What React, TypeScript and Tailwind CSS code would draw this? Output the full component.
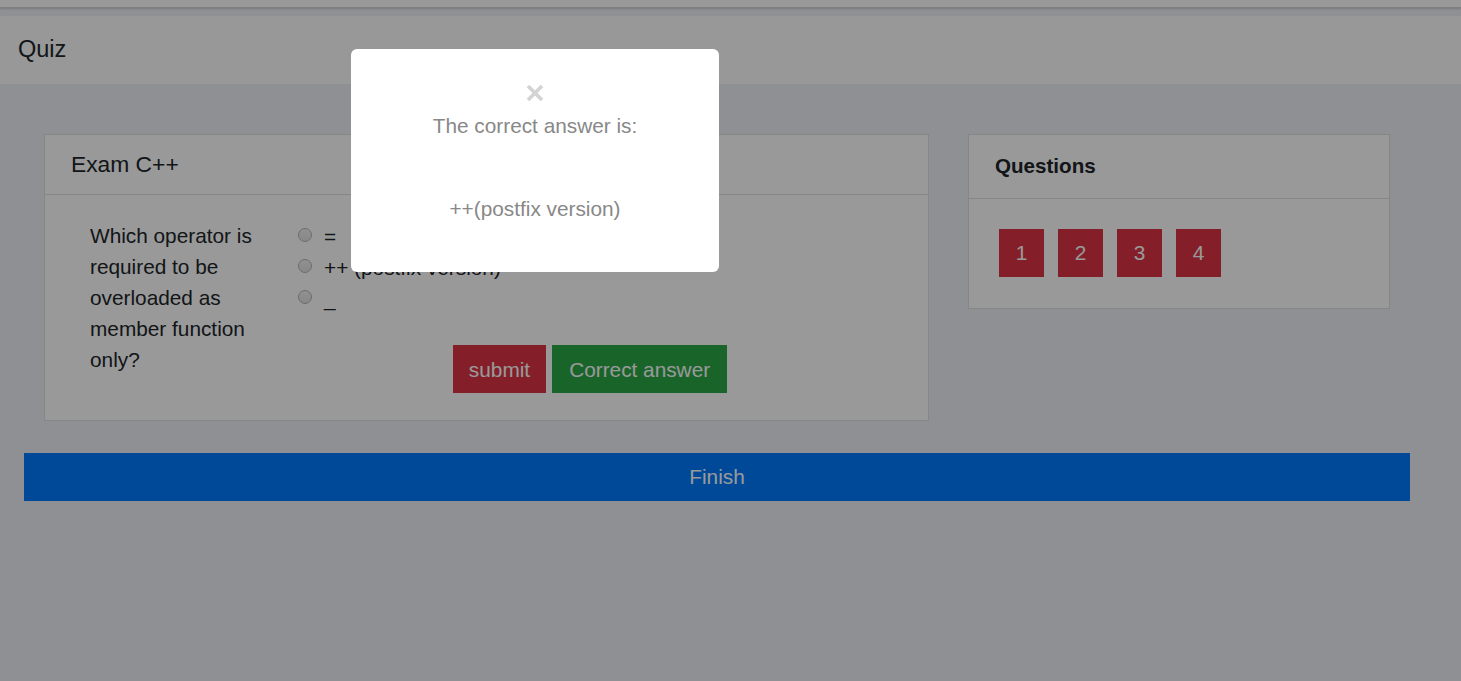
import React from "react";

const options = ["=", "++ (postfix version)", "_"];
const questions = [1, 2, 3, 4];

export default function App() {
  return (
    <div className="relative min-h-[681px] bg-[#eef0f6] font-['Liberation_Sans',Arial,sans-serif] text-[#212529] overflow-hidden">
      {/* top strip */}
      <div className="h-[8px] bg-white border-b border-[#d4d4d4] shadow-[0_1px_2px_rgba(0,0,0,0.15)]"></div>

      {/* navbar */}
      <nav className="mt-[8px] h-[68px] bg-[#fdfdfd] flex items-center pl-[18px]">
        <span className="text-[23.5px]">Quiz</span>
      </nav>

      <main className="pl-[24px] pt-[50px]">
        <div className="flex items-start gap-[39px] pl-[20px]">
          {/* exam card */}
          <section className="w-[885px] bg-white border border-[#dfdfdf]">
            <header className="h-[60px] border-b border-[#dfdfdf] flex items-center pl-[26px]">
              <h2 className="text-[22.8px]">Exam C++</h2>
            </header>
            <div className="flex pl-[45px] pt-[26px] pb-[27px] text-[20.8px] leading-[31px]">
              <p className="w-[178px] -mt-[1px]">Which operator is required to be overloaded as member function only?</p>
              <div className="ml-[30px] w-[584px]">
                {options.map((o) => (
                  <label key={o} className="flex items-center h-[31px]">
                    <span className="w-[14px] h-[14px] rounded-full border border-[#b5b5b5] bg-[linear-gradient(#f2f2f2,#e2e2e2)] -mt-[4px]"></span>
                    <span className="ml-[12px]">{o}</span>
                  </label>
                ))}
                <div className="flex justify-center gap-[6px] mt-[31px]">
                  <button className="h-[48px] px-[16px] bg-[#dc3545] text-white text-[20.8px]">submit</button>
                  <button className="h-[48px] px-[17px] bg-[#28a745] text-white text-[20.8px]">Correct answer</button>
                </div>
              </div>
            </div>
          </section>

          {/* questions card */}
          <section className="w-[422px] bg-white border border-[#dfdfdf]">
            <header className="h-[64px] border-b border-[#dfdfdf] flex items-center pl-[26px]">
              <h2 className="text-[20.6px] font-bold">Questions</h2>
            </header>
            <div className="flex gap-[14px] pl-[30px] pt-[30px] pb-[31px]">
              {questions.map((q) => (
                <button key={q} className="w-[45px] h-[48px] bg-[#dc3545] text-white text-[20.8px]">
                  {q}
                </button>
              ))}
            </div>
          </section>
        </div>

        <button className="mt-[32px] w-[1386px] h-[48px] bg-[#007bff] text-white text-[20.8px]">Finish</button>
      </main>

      {/* backdrop */}
      <div className="absolute inset-0 bg-black/40"></div>

      {/* modal */}
      <div className="absolute left-[351px] top-[49px] w-[368px] h-[223px] bg-white rounded-[6px] flex flex-col items-center pt-[30px] text-[20.8px] text-[#888888]">
        <div className="h-[28px] flex items-center justify-center">
          <svg width="18" height="16" viewBox="0 0 18 16">
            <path d="M2 1 L16 15 M16 1 L2 15" stroke="#d3d3d3" strokeWidth="3.6" />
          </svg>
        </div>
        <p className="mt-[4px] leading-[30px]">The correct answer is:</p>
        <p className="mt-[53px] leading-[30px]">++(postfix version)</p>
      </div>
    </div>
  );
}
